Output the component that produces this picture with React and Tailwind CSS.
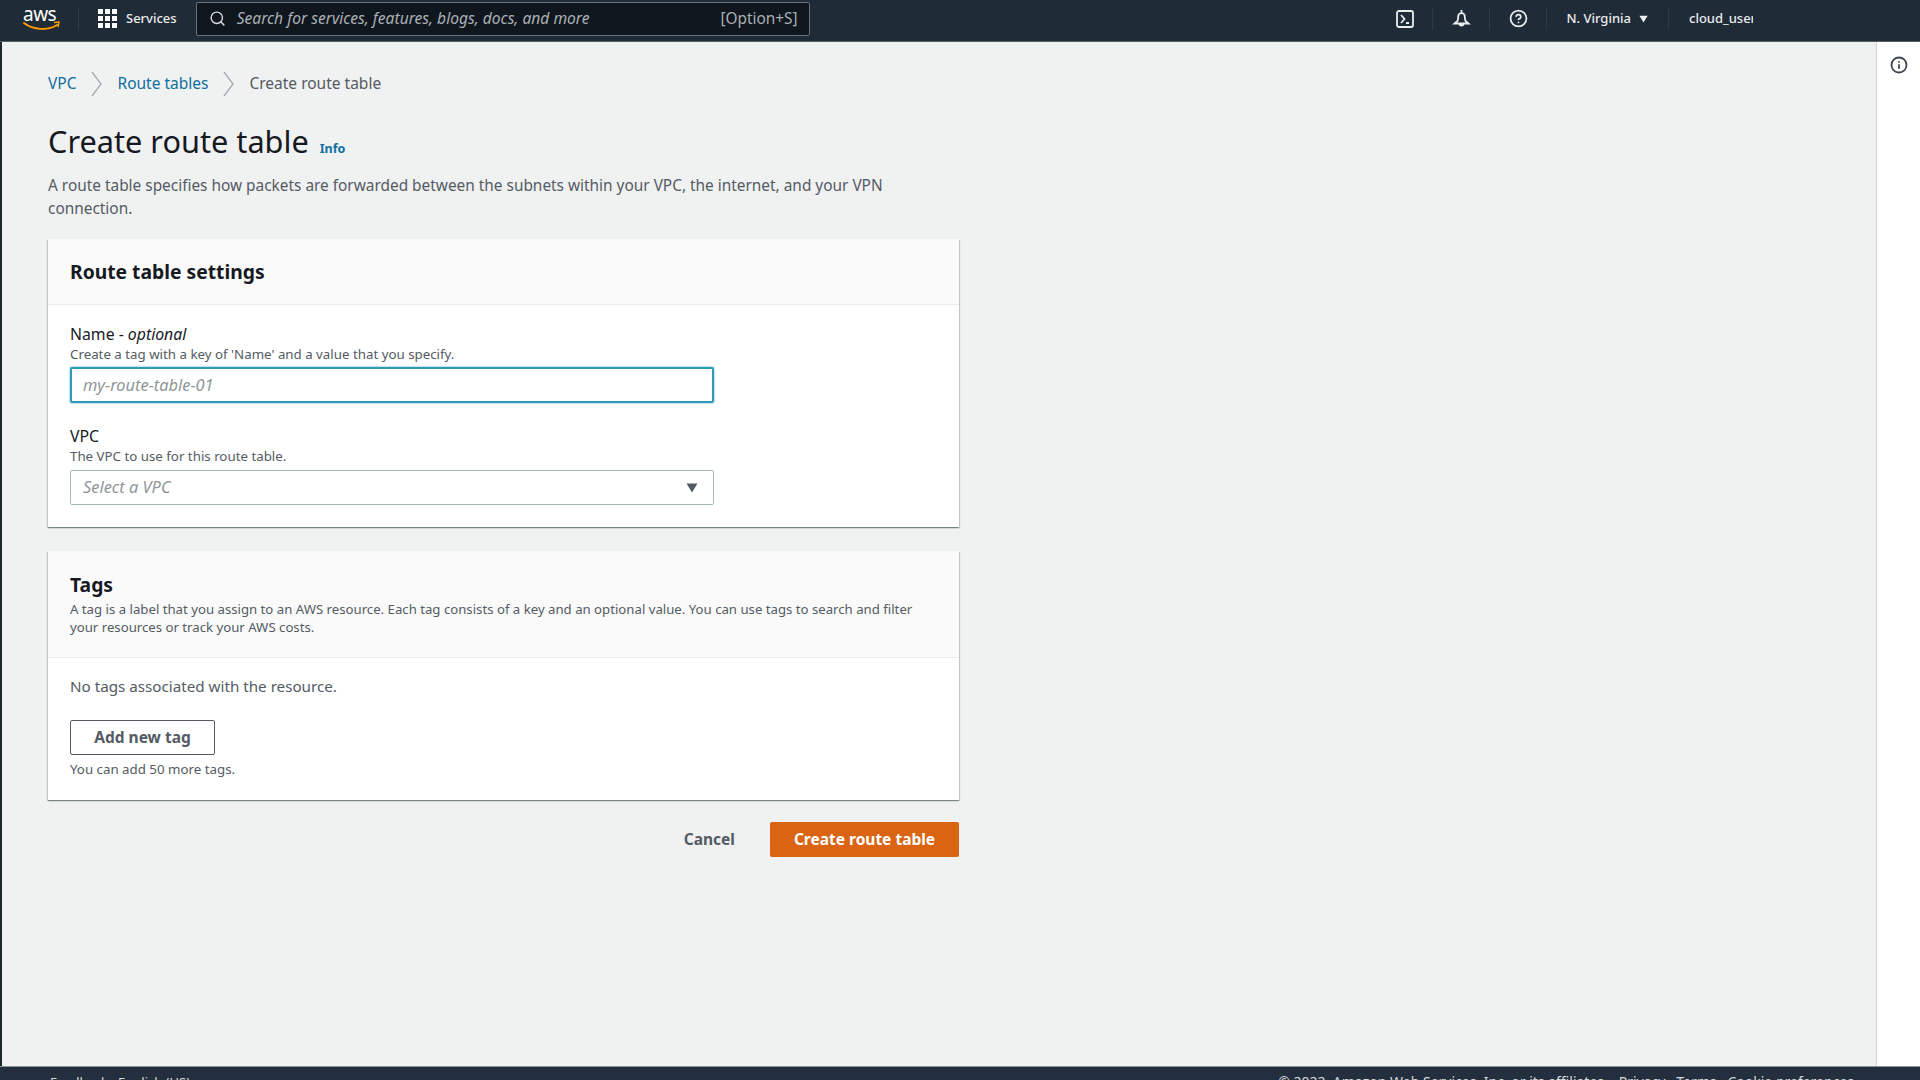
import React from "react";
import { Search, CircleHelp, Info } from "lucide-react";

function AwsLogo() {
  return (
    <div className="relative w-[38px] h-[26px]">
      <span className="absolute left-0 -top-[4px] text-white text-[19px] leading-[24px] tracking-[-0.5px]">aws</span>
      <svg className="absolute left-0 bottom-0" width="38" height="12" viewBox="0 0 38 12" fill="none">
        <path d="M1 3c9 7 24 8 33 2" stroke="#f90" strokeWidth="2" strokeLinecap="round" />
        <path d="M31 2.500l5-.5-1 5" stroke="#f90" strokeWidth="1.500" />
      </svg>
    </div>
  );
}

function GridIcon() {
  return (
    <div className="grid grid-cols-3 gap-[2px] w-[19px]">
      {[1, 2, 3, 4, 5, 6, 7, 8, 9].map((n) => (
        <span key={n} className="w-[5px] h-[5px] bg-white" />
      ))}
    </div>
  );
}

function Divider() {
  return <span className="block w-px h-[22px] bg-[#2f3a48]" />;
}

function Caret({ className }) {
  return (
    <svg className={className} width="12" height="10" viewBox="0 0 12 10">
      <path d="M0.500 0.500h11L6 9.500z" fill="currentColor" />
    </svg>
  );
}

function Crumb() {
  return (
    <svg className="mx-[15px]" width="11" height="28" viewBox="0 0 11 28" fill="none" stroke="#a3abb0" strokeWidth="1.300">
      <path d="M1 2l9 12-9 12" />
    </svg>
  );
}

function TopBar() {
  return (
    <header className="h-[42px] shrink-0 bg-[#202b38] border-b border-[#566068] flex items-center pl-[23px] pb-[4px] text-[#eaeded]">
      <AwsLogo />
      <span className="ml-[17px]"><Divider /></span>
      <span className="ml-[19px]"><GridIcon /></span>
      <span className="ml-[9px] text-[13px] font-medium">Services</span>
      <div className="ml-[19px] w-[614px] h-[34px] bg-[#10161d] border border-[#68717b] rounded-[2px] flex items-center pl-[12px] pr-[11px]">
        <Search size={17} strokeWidth={2} className="text-[#d5dbdb]" />
        <span className="ml-[11px] text-[#a9b0b5] italic text-[15.600px]">Search for services, features, blogs, docs, and more</span>
        <span className="ml-auto text-[#a9b0b5] text-[15.400px]">[Option+S]</span>
      </div>
      <div className="ml-auto flex items-center">
        <svg width="18" height="18" viewBox="0 0 18 18" fill="none" stroke="#eaeded" strokeWidth="1.800">
          <rect x="1" y="1" width="16" height="16" rx="2" />
          <path d="M5 5l3.500 4L5 13M10 13h3" />
        </svg>
        <span className="ml-[18px]"><Divider /></span>
        <svg className="ml-[19px]" width="19" height="19" viewBox="0 0 19 19" fill="none" stroke="#eaeded" strokeWidth="1.800">
          <path d="M9.500 1v2.500M5.500 12c.7-1.500.7-3 .7-4.500a3.300 3.300 0 0 1 6.600 0c0 1.500 0 3 .7 4.500l3 2.500H2.500zM7.500 14.500a2 2 0 0 0 4 0" />
        </svg>
        <span className="ml-[18px]"><Divider /></span>
        <CircleHelp size={19} strokeWidth={2.200} className="ml-[19px]" />
        <span className="ml-[18px]"><Divider /></span>
        <span className="ml-[19px] text-[13px] font-medium">N. Virginia</span>
        <Caret className="ml-[8px] w-[9px] h-[8px]" />
        <span className="ml-[20px]"><Divider /></span>
        <div className="ml-[20px] w-[64px] overflow-hidden whitespace-nowrap text-[13px] font-medium mr-[167px]">cloud_user</div>
      </div>
    </header>
  );
}

function Crumbs() {
  return (
    <nav className="flex items-center text-[15.500px] h-[22px]">
      <a className="text-[#0f6f9f]">VPC</a>
      <Crumb />
      <a className="text-[#0f6f9f]">Route tables</a>
      <Crumb />
      <span className="text-[#545b64]">Create route table</span>
    </nav>
  );
}

function Card({ children }) {
  return <section className="bg-white shadow-[0_1px_1px_0_rgba(0,28,36,0.3),1px_1px_1px_0_rgba(0,28,36,0.15),-1px_1px_1px_0_rgba(0,28,36,0.15)]">{children}</section>;
}

export default function App() {
  return (
    <div className="h-screen overflow-hidden flex flex-col bg-[#f0f1f1] font-['Noto_Sans',sans-serif]">
      <TopBar />
      <div className="flex-1 min-h-0 flex border-l-2 border-[#20262d]">
        <main className="flex-1 pl-[46px] pt-[31px]">
          <Crumbs />
          <div className="w-[911px]">
            <h1 className="mt-[26px] flex items-baseline text-[30.700px] leading-[40px] text-[#16191f]">
              Create route table
              <a className="ml-[11px] text-[12.500px] font-bold text-[#0f6f9f]">Info</a>
            </h1>
            <p className="mt-[6px] text-[15.400px] leading-[22.500px] text-[#545b64] w-[860px]">
              A route table specifies how packets are forwarded between the subnets within your VPC, the internet, and your VPN connection.
            </p>

            <div className="mt-[19px]">
              <Card>
                <div className="h-[66px] px-[22px] pt-[2px] flex items-center bg-[#fafafa] border-b border-[#eaeded]">
                  <h2 className="text-[19.300px] font-bold text-[#16191f]">Route table settings</h2>
                </div>
                <div className="px-[22px] pt-[18px] pb-[22px]">
                  <div className="text-[15.800px] leading-[22px] text-[#16191f]">Name - <i>optional</i></div>
                  <div className="text-[13.300px] leading-[19px] text-[#545b64]">Create a tag with a key of 'Name' and a value that you specify.</div>
                  <div className="mt-[3px] w-[644px] h-[36px] border-2 border-[#2d9cb5] rounded-[2px] flex items-center pl-[11px] text-[16.400px] italic text-[#8f9699] shadow-[0_0_2px_#2d9cb5]">
                    my-route-table-01
                  </div>
                  <div className="mt-[22px] text-[15.800px] leading-[22px] text-[#16191f]">VPC</div>
                  <div className="text-[13.300px] leading-[19px] text-[#545b64]">The VPC to use for this route table.</div>
                  <div className="mt-[4px] w-[644px] h-[35px] border border-[#aab7b8] rounded-[2px] flex items-center pl-[12px] pr-[15px] text-[16.400px] italic text-[#8f9699]">
                    Select a VPC
                    <Caret className="ml-auto text-[#545b64]" />
                  </div>
                </div>
              </Card>
            </div>

            <div className="mt-[24px]">
              <Card>
                <div className="h-[107px] px-[22px] pt-[21px] bg-[#fafafa] border-b border-[#eaeded]">
                  <h2 className="text-[19.300px] leading-[26px] font-bold text-[#16191f]">Tags</h2>
                  <p className="mt-[3px] w-[850px] text-[13.200px] leading-[17.500px] text-[#545b64]">
                    A tag is a label that you assign to an AWS resource. Each tag consists of a key and an optional value. You can use tags to search and filter your resources or track your AWS costs.
                  </p>
                </div>
                <div className="px-[22px] pt-[16px] pb-[21px]">
                  <div className="text-[15.200px] leading-[24px] text-[#545b64]">No tags associated with the resource.</div>
                  <button className="mt-[22px] block w-[145px] h-[35px] border border-[#545b64] rounded-[2px] text-[15.500px] font-bold text-[#545b64] bg-white">Add new tag</button>
                  <div className="mt-[5px] text-[13.300px] leading-[19px] text-[#545b64]">You can add 50 more tags.</div>
                </div>
              </Card>
            </div>

            <div className="mt-[22px] flex items-center justify-end">
              <button className="text-[15.500px] font-bold text-[#545b64] mr-[35px]">Cancel</button>
              <button className="w-[189px] h-[35px] bg-[#da6412] rounded-[2px] text-[15.500px] font-bold text-white">Create route table</button>
            </div>
          </div>
        </main>
        <aside className="w-[44px] shrink-0 bg-white border-l border-[#cfd3d4] flex justify-center pt-[14px]">
          <Info size={18} strokeWidth={2.400} className="text-[#414750]" />
        </aside>
      </div>
      <footer className="h-[14px] shrink-0 bg-[#232f3e] border-t border-[#8d9599] overflow-hidden flex justify-between pl-[50px] pr-[66px] text-[#d5dbdb] text-[13px] leading-[30px]">
        <span>Feedback &nbsp; English (US)</span>
        <span className="text-[14px]">© 2022, Amazon Web Services, Inc. or its affiliates. &nbsp; Privacy &nbsp; Terms &nbsp; Cookie preferences</span>
      </footer>
    </div>
  );
}
